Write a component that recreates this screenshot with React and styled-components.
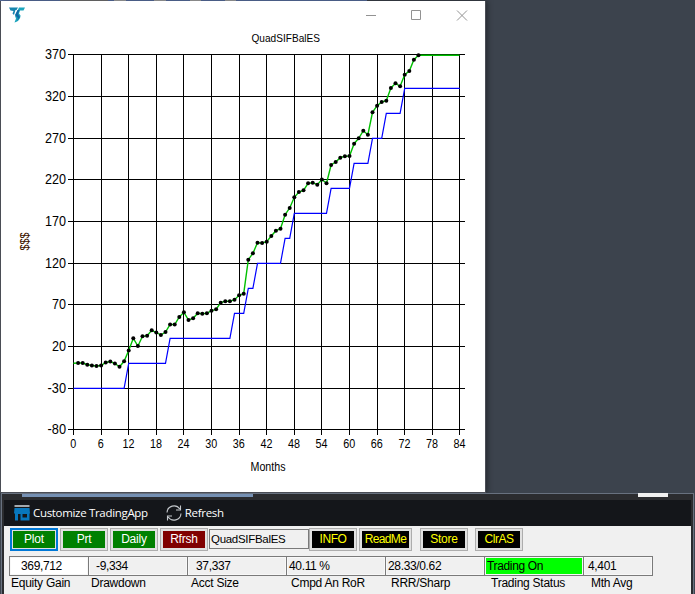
import React from "react";
import styled, { createGlobalStyle } from "styled-components";

const EQUITY = [
  363.3, 363, 363, 364.7, 365.5, 366, 365.5, 362.5, 361.5, 363.5, 366.8, 361.3,
  350.5, 338.3, 346, 336.3, 335.8, 330.3, 332.5, 335, 332, 324.5, 324.5, 317,
  312.3, 320, 318.3, 313.3, 313.7, 313.3, 310.7, 309.3, 302.7, 301.3, 301.3,
  299.7, 295.3, 293.7, 259.7, 253.3, 242.7, 243, 241.7, 236, 230.7, 228.7,
  214.7, 208, 197.3, 192, 190.3, 183.3, 182.7, 184.7, 179.5, 183.3, 165, 162,
  157.7, 156.3, 156, 143.7, 138.3, 130.7, 134.7, 112.3, 105.7, 102, 100.7, 88,
  83.3, 86.3, 74.7, 71, 59.7, 55.3,
];

// [level, first month, last month]
const STEPS = [
  [-30, 0, 11],
  [0, 12, 20],
  [30, 21, 34],
  [60, 35, 37],
  [90, 38, 39],
  [120, 40, 45],
  [150, 46, 47],
  [180, 48, 55],
  [210, 56, 60],
  [240, 61, 64],
  [270, 65, 67],
  [300, 68, 71],
  [330, 72, 84],
];

const Y_LABELS = [370, 320, 270, 220, 170, 120, 70, 20, -30, -80];
const X_LABELS = [0, 6, 12, 18, 24, 30, 36, 42, 48, 54, 60, 66, 72, 78, 84];

const monthX = (m) => 73.5 + m * 4.6;
const levelY = (v) => 54.5 + ((370 - v) * 375) / 450;
const snapX = (m) => Math.floor(monthX(m)) + 0.5;
const snapY = (v) => Math.floor(levelY(v) + 0.3) + 0.5;

const BUTTONS = [
  { text: "Plot", bg: "#008000", focused: true },
  { text: "Prt", bg: "#008000", gap: 2 },
  { text: "Daily", bg: "#008000", gap: 2 },
  { text: "Rfrsh", bg: "#800000", gap: 2 },
];

const DARK_BUTTONS = [
  { text: "INFO", gap: 0, track: -0.4 },
  { text: "ReadMe", gap: 2, width: 53, track: -0.65 },
  { text: "Store", gap: 8 },
  { text: "ClrAS", gap: 7, track: -0.5 },
];

const STATS = [
  { value: "369,712", label: "Equity Gain", width: 79, pad: 11, labelPad: 2, bg: "#fff" },
  { value: "-9,334", label: "Drawdown", width: 99, pad: 7, labelPad: 3 },
  { value: "37,337", label: "Acct Size", width: 99, pad: 8, labelPad: 4 },
  { value: "40.11 %", label: "Cmpd An RoR", width: 99, pad: 2, labelPad: 5 },
  { value: "28.33/0.62", label: "RRR/Sharp", width: 99, pad: 2, labelPad: 6 },
  { value: "Trading On", label: "Trading Status", width: 99, pad: 2, labelPad: 7, bg: "#00ff00" },
  { value: "4,401", label: "Mth Avg", width: 69, pad: 4, labelPad: 8 },
];

const Chart = () => {
  const equity = EQUITY.map((y, m) => `${monthX(m)},${y}`).join(" ");
  const steps = STEPS.map(
    ([v, a, b]) => `${monthX(a)},${snapY(v) - 0.2} ${monthX(b)},${snapY(v) - 0.2}`
  ).join(" ");

  return (
    <ChartSvg width="484" height="463" viewBox="1 29 484 463">
      <g stroke="#000" strokeWidth="1" shapeRendering="crispEdges">
        {Y_LABELS.map((v) => (
          <line key={v} x1="68" x2="465" y1={snapY(v)} y2={snapY(v)} />
        ))}
        {X_LABELS.map((m) => (
          <line key={m} x1={snapX(m)} x2={snapX(m)} y1="54" y2="435" />
        ))}
      </g>
      <polyline points={steps} fill="none" stroke="#0000ff" strokeWidth="1.2" />
      <polyline points={`${equity} 459.5,55.3`} fill="none" stroke="#00c000" strokeWidth="1.4" />
      {EQUITY.map((y, m) => m > 0 && <circle key={m} cx={monthX(m)} cy={y} r="2" />)}
      <ChartText x="251.5" y="42" textLength="68.5" size={11.5}>QuadSIFBalES</ChartText>
      {Y_LABELS.map((v) => {
        const len = { 3: 21, 2: 14 }[String(Math.abs(v)).length] + (v < 0 ? 4.5 : 0);
        return (
          <ChartText key={v} x={66 - len} y={levelY(v) + 4.8} textLength={len} size={14}>
            {v}
          </ChartText>
        );
      })}
      {X_LABELS.map((m) => {
        const len = m > 9 ? 12 : 6;
        return (
          <ChartText key={m} x={monthX(m) - len / 2 - 0.3} y="448" textLength={len} size={12}>
            {m}
          </ChartText>
        );
      })}
      <ChartText x="250.5" y="471" textLength="35" size={12}>Months</ChartText>
      <ChartText transform="translate(29 250.5) rotate(-90)" textLength="18" size={12.5} fill="#3c1400">
        $$$
      </ChartText>
    </ChartSvg>
  );
};

const App = () => {
  return (
    <Desktop>
      <GlobalStyle />
      <TopStrip />
      <PlotWindow>
        <TitleBar>
          <svg width="16" height="17" viewBox="0 0 16 17">
            <path d="M0 .5h9L7.500 3H6.500L5 8 3.500 6.500 4.500 4 1.500 3.500z" fill="#1685ae" />
            <path d="M10 .5h6L14.500 3.500H11L10 6.500l1.500 2c0 3-2 6-6 7l1.500-4-1-2.500z" fill="#1ba5bd" />
            <path d="M8.500 3 6 8l3 3-1 3 3-4-2-3 1.500-4z" fill="#1269a4" />
          </svg>
          <Controls>
            <svg width="102" height="11" viewBox="0 0 102 11" fill="none" stroke="#929292">
              <path d="M0 5.500h10M45.500.5h9v9h-9z" />
              <path d="M91 .5l10 10M101 .5l-10 10" />
            </svg>
          </Controls>
        </TitleBar>
        <Chart />
      </PlotWindow>
      <AppWindow>
        <Frame>
          <BlueTab />
          <WhiteTab />
        </Frame>
        <MenuBar>
          <MenuItem>
            <svg width="16" height="16" viewBox="0 0 16 16">
              <path d="M.5 0h15v2H.5z" fill="#a4a9ae" />
              <path d="M.5 3h15l.5 5.500h-.5V15.500H6.500V9H4v6.500H1V8.500H0z" fill="#0877bd" />
              <path d="M8.500 9H13v3.500H8.500z" fill="#14161a" />
            </svg>
            <MenuText>Customize TradingApp</MenuText>
          </MenuItem>
          <MenuItem $gap={18}>
            <svg width="16" height="16" viewBox="0 0 16 16" fill="none" stroke="#c3c7cb" strokeWidth="1.1">
              <path d="M1 7.500A7 7 0 0 1 13.800 4M14.500.5V5H10M15 8.500A7 7 0 0 1 2.200 12M1.500 15.500V11H6" />
            </svg>
            <MenuText>Refresh</MenuText>
          </MenuItem>
        </MenuBar>
        <ButtonRow>
          {BUTTONS.map((el) => (
            <Button key={el.text} $gap={el.gap} $focused={el.focused}>
              <Face $bg={el.bg}>{el.text}</Face>
            </Button>
          ))}
          <NameField>QuadSIFBalES</NameField>
          {DARK_BUTTONS.map((el) => (
            <Button key={el.text} $gap={el.gap} $width={el.width}>
              <Face $bg="#000" $color="#ffff00" $track={el.track}>{el.text}</Face>
            </Button>
          ))}
        </ButtonRow>
        <StatRow>
          {STATS.map((el) => (
            <Stat key={el.label} $width={el.width}>
              <StatValue $pad={el.pad} $bg={el.bg}>{el.value}</StatValue>
              <StatLabel $pad={el.labelPad}>{el.label}</StatLabel>
            </Stat>
          ))}
        </StatRow>
      </AppWindow>
    </Desktop>
  );
};

export default App;

const GlobalStyle = createGlobalStyle`
  body {
    margin: 0;
    overflow: hidden;
  }

  * {
    box-sizing: border-box;
  }
`;

const Desktop = styled.div`
  display: flex;
  flex-direction: column;
  width: 695px;
  height: 594px;
  overflow: hidden;
  background: #3c434d;
  font-family: "Liberation Sans", Arial, sans-serif;
  font-size: 12px;
  color: #000;
  white-space: pre;
`;

const TopStrip = styled.div`
  flex: none;
  width: 367px;
  height: 1px;
  background: linear-gradient(
    to right,
    #5b73a6 60px,
    #777 60px 108px,
    #5b73a6 108px 114px,
    #aaa 114px 126px,
    #5b73a6 126px 154px,
    #aaa 154px 166px,
    #5b73a6 166px 190px,
    #aaa 190px 201px,
    #5b73a6 201px 225px,
    #aaa 225px 236px,
    #5b73a6 236px
  );
`;

const PlotWindow = styled.div`
  flex: none;
  display: flex;
  flex-direction: column;
  width: 486px;
  height: 492px;
  border: solid #4a4d55;
  border-width: 0 1px 1px;
  background: #fff;
  box-shadow: 1px 0 6px rgba(0, 0, 0, 0.45);
`;

const TitleBar = styled.div`
  display: flex;
  justify-content: space-between;
  height: 28px;
  padding: 6px 17px 0 8px;
`;

const Controls = styled.div`
  padding-top: 3px;
`;

const ChartSvg = styled.svg`
  display: block;
  flex: none;
`;

const ChartText = styled.text.attrs({ lengthAdjust: "spacingAndGlyphs" })`
  font-size: ${({ size }) => size}px;
`;

const AppWindow = styled.div`
  flex: none;
  position: relative;
  width: 693px;
  height: 101px;
  margin-left: 1px;
  padding: 0 2px;
  border: solid #68717f;
  border-width: 1px 1px 0;
  background: #2b2c2f;
`;

const Frame = styled.div`
  display: flex;
  justify-content: space-between;
  height: 6px;
  padding: 0 23px 0 18px;
`;

const BlueTab = styled.div`
  width: 231px;
  height: 3px;
  background: #7590b3;
`;

const WhiteTab = styled.div`
  width: 30px;
  height: 4px;
  margin-top: -1px;
  background: #f0f0f0;
`;

const MenuBar = styled.div`
  display: flex;
  height: 26px;
  padding-left: 10px;
  background: #14161a;
`;

const MenuItem = styled.div`
  display: flex;
  align-items: center;
  gap: 3px;
  margin-left: ${({ $gap }) => $gap || 0}px;
`;

const MenuText = styled.span`
  padding-bottom: 2px;
  font-family: "Open Sans", "Noto Sans", sans-serif;
  font-size: 11.5px;
  letter-spacing: -0.32px;
  color: #fff;
`;

const ButtonRow = styled.div`
  display: flex;
  align-items: flex-start;
  height: 30px;
  padding: 2px 0 0 6px;
  background: #f0f0f0;
`;

const Button = styled.button`
  flex: none;
  width: ${({ $width }) => $width || 48}px;
  height: 23px;
  margin: 0 0 0 ${({ $gap }) => $gap || 0}px;
  padding: ${({ $focused }) => ($focused ? 1 : 2)}px;
  border: ${({ $focused }) => ($focused ? "2px solid #0078d7" : "1px solid #adadad")};
  background: #e1e1e1;
  font: inherit;
`;

const Face = styled.span`
  display: flex;
  justify-content: center;
  height: 17px;
  line-height: 17px;
  background: ${({ $bg }) => $bg};
  color: ${({ $color }) => $color || "#fff"};
  letter-spacing: ${({ $track }) => $track || -0.2}px;
`;

const NameField = styled.div`
  width: 100px;
  height: 20px;
  margin: 1px 0 0 1px;
  padding-left: 1px;
  border: 1px solid #7a7a7a;
  font-size: 11.5px;
  line-height: 18px;
  letter-spacing: -0.3px;
`;

const StatRow = styled.div`
  display: flex;
  height: 38px;
  padding-left: 5px;
  background: #f0f0f0;
`;

const Stat = styled.div`
  flex: none;
  width: ${({ $width }) => $width}px;
`;

const StatValue = styled.div`
  width: calc(100% + 1px);
  height: 20px;
  padding-left: ${({ $pad }) => $pad}px;
  border: 1px solid #7a7a7a;
  box-shadow: inset 0 0 0 1px #f8f8f8;
  background: ${({ $bg }) => $bg || "#f0f0f0"};
  line-height: 18px;
  letter-spacing: -0.35px;
`;

const StatLabel = styled.div`
  padding-left: ${({ $pad }) => $pad}px;
  line-height: 15px;
  letter-spacing: -0.25px;
`;
